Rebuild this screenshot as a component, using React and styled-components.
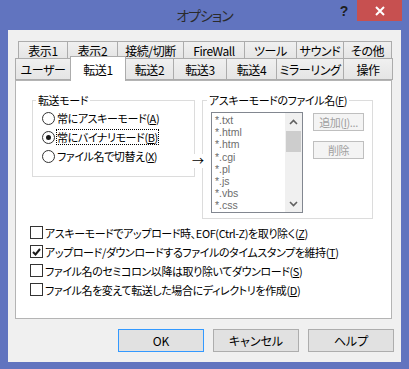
import React from 'react';
import styled, { createGlobalStyle } from 'styled-components';

const GlobalStyle = createGlobalStyle`
  html, body { margin: 0; padding: 0; }
  body {
    font-family: "Noto Sans CJK JP", "Noto Sans", sans-serif;
    font-feature-settings: "palt" 1;
    color: #000;
  }
`;

const Window = styled.div`
  width: 409px;
  height: 369px;
  background: #6174bf;
  display: flex;
  flex-direction: column;
`;

const TitleBar = styled.div`
  height: 30px;
  display: grid;
  grid-template-columns: 1fr auto 1fr;
  align-items: start;
`;

const Title = styled.div`
  grid-column: 2;
  font-size: 14px;
  line-height: 30px;
  letter-spacing: -1px;
  color: #2b2b2b;
`;

const Controls = styled.div`
  justify-self: end;
  display: flex;
  margin-right: 7px;
`;

const HelpButton = styled.div`
  width: 26px;
  height: 21px;
  display: flex;
  align-items: center;
  justify-content: center;
  font: bold 14px "Liberation Sans", sans-serif;
  color: #1e1e1e;
`;

const CloseButton = styled.div`
  width: 45px;
  height: 21px;
  background: #c75050;
  display: flex;
  align-items: center;
  justify-content: center;
`;

const Client = styled.div`
  flex: 1;
  margin: 0 8px 8px;
  background: #f0f0f0;
  padding: 11px 7px 10px 7px;
  display: flex;
  flex-direction: column;
`;

const TabArea = styled.div`
  width: 377px;
  display: flex;
  flex-direction: column;
`;

const TabRow = styled.div`
  display: flex;
  align-items: flex-end;
  height: ${p => p.$h}px;
  padding-left: ${p => p.$indent}px;
  position: relative;
  z-index: ${p => p.$front ? 2 : 1};
`;

const Tab = styled.div`
  box-sizing: border-box;
  width: ${p => p.$w + 1}px;
  height: ${p => p.$active ? p.$h + 3 : p.$h}px;
  margin-right: -1px;
  margin-bottom: ${p => p.$active ? -1 : 0}px;
  border: 1px solid #acacac;
  border-bottom: ${p => p.$active ? 'none' : '1px solid #acacac'};
  background: ${p => p.$active ? '#fff' : 'linear-gradient(#f0f0f0, #e5e5e5)'};
  position: relative;
  z-index: ${p => p.$active ? 3 : 1};
  display: flex;
  align-items: center;
  justify-content: center;
  padding-top: ${p => p.$active ? 0 : 1}px;
  font-size: 12px;
  letter-spacing: -0.4px;
  white-space: nowrap;
  color: #000;
`;

const Panel = styled.div`
  box-sizing: border-box;
  height: 239px;
  border: 1px solid #b4b4b4;
  background: #fff;
  padding: 12px 0 0 14px;
`;

const TopSection = styled.div`
  display: flex;
  gap: 7px;
  align-items: flex-start;
  position: relative;
`;

const Group = styled.fieldset`
  margin: 0 0 0 ${p => p.$ml}px;
  padding: 0;
  width: ${p => p.$w}px;
  box-sizing: border-box;
  min-width: 0;
  border: 1px solid #dcdcdc;
`;

const Legend = styled.legend`
  margin-left: ${p => p.$ml}px;
  padding: 0 2px;
  font-size: 11px;
  letter-spacing: -0.4px;
  line-height: 14px;
`;

const RadioList = styled.div`
  display: flex;
  flex-direction: column;
  gap: 1px;
  padding: 2px 0 11px 9px;
`;

const OptionRow = styled.div`
  height: ${p => p.$h}px;
  display: flex;
  align-items: center;
  gap: 2px;
  font-size: 11px;
  letter-spacing: -0.4px;
  white-space: nowrap;
`;

const RadioCircle = styled.span`
  box-sizing: border-box;
  width: 13px;
  height: 13px;
  border-radius: 50%;
  border: 1px solid #333;
  background: #fff;
  display: flex;
  align-items: center;
  justify-content: center;
  flex: none;
  &::after {
    content: '';
    display: ${p => p.$on ? 'block' : 'none'};
    width: 5px;
    height: 5px;
    border-radius: 50%;
    background: #1a1a1a;
  }
`;

const Focused = styled.span`
  outline: 1px dotted #000;
  outline-offset: 0;
  line-height: 14px;
`;

const Arrow = styled.span`
  position: absolute;
  left: 162px;
  top: 61px;
  font-size: 12px;
  line-height: 14px;
  background: #fff;
`;

const RightBody = styled.div`
  display: flex;
  align-items: flex-start;
  padding: 5px 0 5px 8px;
`;

const ListBox = styled.div`
  box-sizing: border-box;
  width: 92px;
  height: 101px;
  border: 1px solid #828790;
  display: flex;
`;

const ListItems = styled.div`
  flex: 1;
  overflow: hidden;
  padding: 1px 0 0 3px;
  font-family: "Liberation Sans", Arial, sans-serif;
  font-size: 10.5px;
  line-height: 12.2px;
  color: #6d6d6d;
`;

const ScrollBar = styled.div`
  width: 17px;
  background: #f0f0f0;
  display: flex;
  flex-direction: column;
`;

const ScrollArrow = styled.div`
  height: 17px;
  display: flex;
  align-items: center;
  justify-content: center;
`;

const ScrollTrack = styled.div`
  flex: 1;
  padding: 1px 1px 0;
`;

const Thumb = styled.div`
  height: 21px;
  background: #cdcdcd;
`;

const SideButtons = styled.div`
  display: flex;
  flex-direction: column;
  gap: 10px;
  margin: 1px 0 0 10px;
`;

const SmallButton = styled.div`
  box-sizing: border-box;
  width: 51px;
  height: 18px;
  border: 1px solid #bfbfbf;
  background: #f4f4f4;
  color: #a0a0a0;
  font-size: 11px;
  letter-spacing: -0.4px;
  display: flex;
  align-items: center;
  justify-content: center;
  white-space: nowrap;
`;

const CheckList = styled.div`
  display: flex;
  flex-direction: column;
  margin-top: 4px;
`;

const CheckBox = styled.span`
  box-sizing: border-box;
  width: 13px;
  height: 13px;
  border: 1px solid #333;
  background: #fff;
  flex: none;
  display: flex;
  align-items: center;
  justify-content: center;
`;

const ButtonRow = styled.div`
  display: flex;
  justify-content: flex-end;
  gap: 9px;
  margin-top: 10px;
`;

const Button = styled.div`
  box-sizing: border-box;
  width: 86px;
  height: 23px;
  border: 1px solid ${p => p.$default ? '#3399ff' : '#adadad'};
  background: #e1e1e1;
  font-size: 12px;
  display: flex;
  align-items: center;
  justify-content: center;
`;

const row1 = [
  ['表示1', 49], ['表示2', 50], ['接続/切断', 66], ['FireWall', 61],
  ['ツール', 52], ['サウンド', 47], ['その他', 48],
];
const row2 = [
  ['ユーザー', 55], ['転送1', 55], ['転送2', 48], ['転送3', 53],
  ['転送4', 50], ['ミラーリング', 67], ['操作', 49],
];
const files = ['*.txt', '*.html', '*.htm', '*.cgi', '*.pl', '*.js', '*.vbs', '*.css'];

const Mn = ({ k }) => <>(<u>{k}</u>)</>;

const Check = ({ on, children }) => (
  <OptionRow $h={19}>
    <CheckBox>
      {on && (
        <svg width="9" height="8" viewBox="0 0 9 8">
          <path d="M1 4 L3.5 6.5 L8 1" fill="none" stroke="#1a1a1a" strokeWidth="2" />
        </svg>
      )}
    </CheckBox>
    <span>{children}</span>
  </OptionRow>
);

const App = () => {
  return (
    <Window>
      <GlobalStyle />
      <TitleBar>
        <Title>オプション</Title>
        <Controls>
          <HelpButton>?</HelpButton>
          <CloseButton>
            <svg width="10" height="10" viewBox="0 0 10 10">
              <path d="M1 1 L9 9 M9 1 L1 9" stroke="#fff" strokeWidth="2" />
            </svg>
          </CloseButton>
        </Controls>
      </TitleBar>
      <Client>
        <TabArea>
          <TabRow $h={18} $indent={3}>
            {row1.map(([t, w]) => <Tab key={t} $w={w} $h={18}>{t}</Tab>)}
          </TabRow>
          <TabRow $h={21} $indent={0} $front>
            {row2.map(([t, w]) => (
              <Tab key={t} $w={w} $h={22} $active={t === '転送1'}>{t}</Tab>
            ))}
          </TabRow>
          <Panel>
            <TopSection>
              <Group $w={163} $ml={2}>
                <Legend $ml={3}>転送モード</Legend>
                <RadioList>
                  <OptionRow $h={18}>
                    <RadioCircle />
                    <span>常にアスキーモード<Mn k="A" /></span>
                  </OptionRow>
                  <OptionRow $h={18}>
                    <RadioCircle $on />
                    <Focused>常にバイナリモード<Mn k="B" /></Focused>
                  </OptionRow>
                  <OptionRow $h={18}>
                    <RadioCircle />
                    <span>ファイル名で切替え<Mn k="X" /></span>
                  </OptionRow>
                </RadioList>
              </Group>
              <Arrow>→</Arrow>
              <Group $w={171} $ml={0}>
                <Legend $ml={4}>アスキーモードのファイル名<Mn k="F" /></Legend>
                <RightBody>
                  <ListBox>
                    <ListItems>
                      {files.map(f => <div key={f}>{f}</div>)}
                    </ListItems>
                    <ScrollBar>
                      <ScrollArrow>
                        <svg width="9" height="6" viewBox="0 0 9 6">
                          <path d="M1 5 L4.5 1.5 L8 5" fill="none" stroke="#606060" strokeWidth="1.6" />
                        </svg>
                      </ScrollArrow>
                      <ScrollTrack><Thumb /></ScrollTrack>
                      <ScrollArrow>
                        <svg width="9" height="6" viewBox="0 0 9 6">
                          <path d="M1 1 L4.5 4.5 L8 1" fill="none" stroke="#606060" strokeWidth="1.6" />
                        </svg>
                      </ScrollArrow>
                    </ScrollBar>
                  </ListBox>
                  <SideButtons>
                    <SmallButton>追加<Mn k="I" />...</SmallButton>
                    <SmallButton>削除</SmallButton>
                  </SideButtons>
                </RightBody>
              </Group>
            </TopSection>
            <CheckList>
              <Check>アスキーモードでアップロード時、EOF(Ctrl-Z)を取り除く<Mn k="Z" /></Check>
              <Check on>アップロード/ダウンロードするファイルのタイムスタンプを維持<Mn k="T" /></Check>
              <Check>ファイル名のセミコロン以降は取り除いてダウンロード<Mn k="S" /></Check>
              <Check>ファイル名を変えて転送した場合にディレクトリを作成<Mn k="D" /></Check>
            </CheckList>
          </Panel>
        </TabArea>
        <ButtonRow>
          <Button $default>OK</Button>
          <Button>キャンセル</Button>
          <Button>ヘルプ</Button>
        </ButtonRow>
      </Client>
    </Window>
  );
};

export default App;
